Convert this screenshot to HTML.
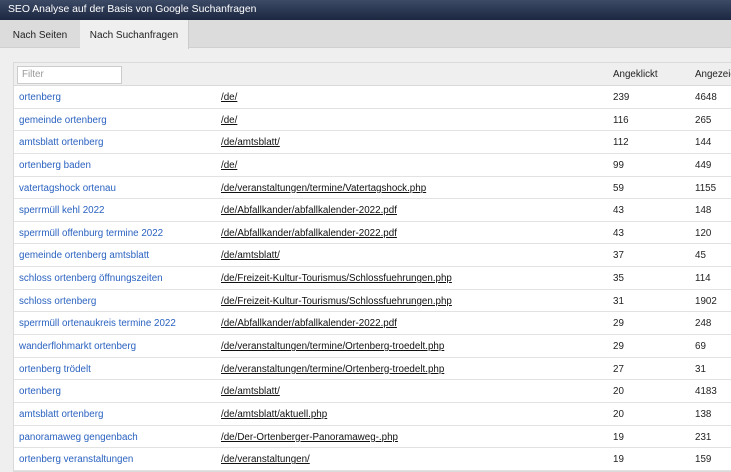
<!DOCTYPE html>
<html><head><meta charset="utf-8"><style>
*{margin:0;padding:0;box-sizing:border-box}
body{width:731px;height:470px;overflow:hidden;background:#efefef;font-family:"Liberation Sans",Arial,sans-serif;font-size:9.8px;color:#222;position:relative}
.title{height:20px;background:linear-gradient(#3c4a66,#1c2740);color:#fff;font-size:10.4px;line-height:19px;padding-left:8px}
.tabs{height:28px;background:#dcdcdc;border-bottom:1px solid #d0d0d0;position:relative}
.tab{position:absolute;top:0;height:28px;line-height:31px;font-size:10px;color:#222}
.t1{left:0;width:80px;text-align:center}
.t2{left:80px;width:109px;background:#efefef;text-align:center;border-right:1px solid #ccc;height:29px}
.tbl{position:absolute;left:13px;top:62px;width:730px;background:#fff;border:1px solid #dadada;border-right:none}
.hdr{height:23px;background:#efefef;border-bottom:1px solid #dadada;position:relative}
.hdr .c{line-height:24px}
.filter{position:absolute;left:3px;top:3px;width:105px;height:18px;background:#fff;border:1px solid #ccc;color:#999;font-size:9.8px;line-height:16px;padding-left:4px}
.row{height:22.65px;border-bottom:1px solid #e2e2e2;position:relative}
.c{position:absolute;top:0;line-height:23px;white-space:nowrap}
.q{left:5px;color:#2a62c0}
.u{left:207px;text-decoration:underline;color:#111}
.a{left:599px}
.b{left:681px}
</style></head><body>
<div class="title">SEO Analyse auf der Basis von Google Suchanfragen</div>
<div class="tabs"><div class="tab t1">Nach Seiten</div><div class="tab t2">Nach Suchanfragen</div></div>
<div class="tbl">
<div class="hdr"><div class="filter">Filter</div><div class="c a">Angeklickt</div><div class="c b">Angezeigt</div></div>
<div class="row"><span class="c q">ortenberg</span><span class="c u">/de/</span><span class="c a">239</span><span class="c b">4648</span></div>
<div class="row"><span class="c q">gemeinde ortenberg</span><span class="c u">/de/</span><span class="c a">116</span><span class="c b">265</span></div>
<div class="row"><span class="c q">amtsblatt ortenberg</span><span class="c u">/de/amtsblatt/</span><span class="c a">112</span><span class="c b">144</span></div>
<div class="row"><span class="c q">ortenberg baden</span><span class="c u">/de/</span><span class="c a">99</span><span class="c b">449</span></div>
<div class="row"><span class="c q">vatertagshock ortenau</span><span class="c u">/de/veranstaltungen/termine/Vatertagshock.php</span><span class="c a">59</span><span class="c b">1155</span></div>
<div class="row"><span class="c q">sperrmüll kehl 2022</span><span class="c u">/de/Abfallkander/abfallkalender-2022.pdf</span><span class="c a">43</span><span class="c b">148</span></div>
<div class="row"><span class="c q">sperrmüll offenburg termine 2022</span><span class="c u">/de/Abfallkander/abfallkalender-2022.pdf</span><span class="c a">43</span><span class="c b">120</span></div>
<div class="row"><span class="c q">gemeinde ortenberg amtsblatt</span><span class="c u">/de/amtsblatt/</span><span class="c a">37</span><span class="c b">45</span></div>
<div class="row"><span class="c q">schloss ortenberg öffnungszeiten</span><span class="c u">/de/Freizeit-Kultur-Tourismus/Schlossfuehrungen.php</span><span class="c a">35</span><span class="c b">114</span></div>
<div class="row"><span class="c q">schloss ortenberg</span><span class="c u">/de/Freizeit-Kultur-Tourismus/Schlossfuehrungen.php</span><span class="c a">31</span><span class="c b">1902</span></div>
<div class="row"><span class="c q">sperrmüll ortenaukreis termine 2022</span><span class="c u">/de/Abfallkander/abfallkalender-2022.pdf</span><span class="c a">29</span><span class="c b">248</span></div>
<div class="row"><span class="c q">wanderflohmarkt ortenberg</span><span class="c u">/de/veranstaltungen/termine/Ortenberg-troedelt.php</span><span class="c a">29</span><span class="c b">69</span></div>
<div class="row"><span class="c q">ortenberg trödelt</span><span class="c u">/de/veranstaltungen/termine/Ortenberg-troedelt.php</span><span class="c a">27</span><span class="c b">31</span></div>
<div class="row"><span class="c q">ortenberg</span><span class="c u">/de/amtsblatt/</span><span class="c a">20</span><span class="c b">4183</span></div>
<div class="row"><span class="c q">amtsblatt ortenberg</span><span class="c u">/de/amtsblatt/aktuell.php</span><span class="c a">20</span><span class="c b">138</span></div>
<div class="row"><span class="c q">panoramaweg gengenbach</span><span class="c u">/de/Der-Ortenberger-Panoramaweg-.php</span><span class="c a">19</span><span class="c b">231</span></div>
<div class="row"><span class="c q">ortenberg veranstaltungen</span><span class="c u">/de/veranstaltungen/</span><span class="c a">19</span><span class="c b">159</span></div>
</div>
</body></html>
